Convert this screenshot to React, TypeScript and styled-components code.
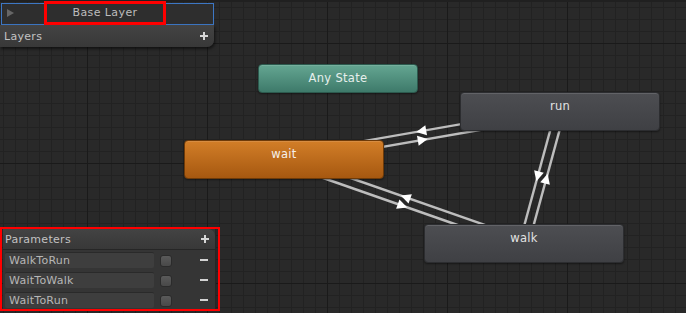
import { FC } from 'react';
import styled, { createGlobalStyle, css } from 'styled-components';

type NodeKind = 'any' | 'default' | 'state';

interface StateNode {
	id: string;
	label: string;
	x: number;
	y: number;
	w: number;
	h: number;
	kind: NodeKind;
}

const NODES: StateNode[] = [
	{ id: 'any', label: 'Any State', x: 258, y: 64, w: 160, h: 29, kind: 'any' },
	{ id: 'run', label: 'run', x: 460, y: 92, w: 200, h: 39, kind: 'state' },
	{ id: 'wait', label: 'wait', x: 184, y: 140, w: 200, h: 39, kind: 'default' },
	{ id: 'walk', label: 'walk', x: 424, y: 224, w: 200, h: 39, kind: 'state' },
];

const TRANSITIONS: [string, string][] = [
	['wait', 'run'],
	['run', 'wait'],
	['wait', 'walk'],
	['walk', 'wait'],
	['run', 'walk'],
	['walk', 'run'],
];

const PARAMETERS = ['WalkToRun', 'WaitToWalk', 'WaitToRun'];

const OFFSET = 4.5;

const center = (id: string) => {
	const n = NODES.find((node) => node.id === id)!;
	return { x: n.x + n.w / 2, y: n.y + n.h / 2 };
};

const Transitions: FC = () => (
	<TransitionLayer width={686} height={313}>
		{TRANSITIONS.map(([from, to]) => {
			const a = center(from);
			const b = center(to);
			const dx = b.x - a.x;
			const dy = b.y - a.y;
			const len = Math.hypot(dx, dy);
			const ux = dx / len;
			const uy = dy / len;
			const ox = -uy * OFFSET;
			const oy = ux * OFFSET;
			const mx = (a.x + b.x) / 2 + ox;
			const my = (a.y + b.y) / 2 + oy;
			const tip = `${mx + ux * 5},${my + uy * 5}`;
			const left = `${mx - ux * 5 - uy * 5},${my - uy * 5 + ux * 5}`;
			const right = `${mx - ux * 5 + uy * 5},${my - uy * 5 - ux * 5}`;
			return (
				<g key={`${from}-${to}`}>
					<line
						x1={a.x + ox}
						y1={a.y + oy}
						x2={b.x + ox}
						y2={b.y + oy}
						stroke="#bdbdbd"
						strokeWidth={2.4}
					/>
					<polygon points={`${tip} ${left} ${right}`} fill="#ffffff" />
				</g>
			);
		})}
	</TransitionLayer>
);

const App: FC = () => (
	<>
		<GlobalStyle />
		<Canvas>
			<Transitions />
			{NODES.map((node) => (
				<Node
					key={node.id}
					$kind={node.kind}
					style={{ left: node.x, top: node.y, width: node.w, height: node.h }}
				>
					{node.label}
				</Node>
			))}
			<Sidebar>
				<TopGroup>
					<LayerBar>
						<PlayTriangle />
						<Crumb>Base Layer</Crumb>
					</LayerBar>
					<SectionHeader $rounded="bottom">
						Layers
						<PlusIcon />
					</SectionHeader>
				</TopGroup>
				<Highlight>
					<ParamsPanel>
						<SectionHeader $rounded="top">
							Parameters
							<PlusIcon />
						</SectionHeader>
						<ParamsBody>
							{PARAMETERS.map((name) => (
								<ParamRow key={name}>
									<ParamField>{name}</ParamField>
									<Checkbox />
									<MinusIcon />
								</ParamRow>
							))}
						</ParamsBody>
					</ParamsPanel>
				</Highlight>
			</Sidebar>
		</Canvas>
	</>
);

const GlobalStyle = createGlobalStyle`
	html, body {
		margin: 0;
		padding: 0;
		background: #292929;
	}
`;

const Canvas = styled.div`
	position: relative;
	width: 686px;
	height: 313px;
	overflow: hidden;
	font-family: 'DejaVu Sans', 'Liberation Sans', sans-serif;
	font-size: 11px;
	background-color: #292929;
	background-image: linear-gradient(to right, #1a1a1a 1px, transparent 1px),
		linear-gradient(to bottom, #1a1a1a 1px, transparent 1px),
		linear-gradient(to right, #222222 1px, transparent 1px),
		linear-gradient(to bottom, #222222 1px, transparent 1px);
	background-size: 120px 120px, 120px 120px, 12px 12px, 12px 12px;
	background-position: 87px 43px, 87px 43px, 3px 7px, 3px 7px;
	box-shadow: inset 0 2px 0 #202020;
`;

const TransitionLayer = styled.svg`
	position: absolute;
	left: 0;
	top: 0;
`;

const nodeColours = {
	any: css`
		background: linear-gradient(#64a692, #3e7a6a);
		border-color: #2c5a4e;
		color: #e6efec;
		line-height: 27px;
	`,
	default: css`
		background: linear-gradient(#d27e28, #a65810);
		border-color: #6e3a08;
		color: #f6f0ea;
		line-height: 26px;
	`,
	state: css`
		background: linear-gradient(#4d4e52, #3f4044);
		border-color: #2c2d30;
		color: #e2e2e2;
		line-height: 26px;
	`,
};

const Node = styled.div<{ $kind: NodeKind }>`
	position: absolute;
	box-sizing: border-box;
	border: 1px solid;
	border-radius: 4px;
	text-align: center;
	letter-spacing: 0.3px;
	font-size: 11.5px;
	box-shadow: 0 1px 2px rgba(0, 0, 0, 0.45), inset 0 1px 0 rgba(255, 255, 255, 0.12);
	${({ $kind }) => nodeColours[$kind]}
`;

const Sidebar = styled.div`
	position: absolute;
	left: 0;
	top: 0;
	bottom: 0;
	width: 220px;
	display: flex;
	flex-direction: column;
	justify-content: space-between;
	padding: 3px 0 2px;
	box-sizing: border-box;
`;

const TopGroup = styled.div`
	display: flex;
	flex-direction: column;
	width: 214px;
`;

const LayerBar = styled.div`
	display: flex;
	align-items: flex-start;
	height: 22px;
	margin-left: 1px;
	box-sizing: border-box;
	border: 1px solid #3d77c4;
	background: #2e2e2e;
`;

const PlayTriangle = styled.span`
	width: 0;
	height: 0;
	margin: 5px 0 0 5px;
	border-left: 7px solid #666666;
	border-top: 4.5px solid transparent;
	border-bottom: 4.5px solid transparent;
`;

const Crumb = styled.div`
	flex: none;
	width: 122px;
	height: 24px;
	margin: -3px 0 0 30px;
	box-sizing: border-box;
	border: 3px solid #ff0000;
	color: #bdbdbd;
	letter-spacing: 0.4px;
	text-align: center;
	line-height: 18px;
`;

const SectionHeader = styled.div<{ $rounded: 'top' | 'bottom' }>`
	position: relative;
	display: flex;
	align-items: center;
	height: 21px;
	padding-left: 4px;
	color: #c2c2c2;
	letter-spacing: 0.3px;
	background: linear-gradient(#434343, #383838);
	${({ $rounded }) =>
		$rounded === 'bottom'
			? css`
					height: 22px;
					border-bottom-right-radius: 7px;
					box-shadow: 1px 2px 3px rgba(0, 0, 0, 0.55);
				`
			: css`
					height: 20px;
					padding-left: 2px;
					border-top-right-radius: 7px;
					border-bottom: 1px solid #262626;
				`}
`;

const PlusIcon = styled.span`
	position: absolute;
	right: 6px;
	top: 50%;
	width: 8px;
	height: 8px;
	margin-top: -4px;

	&::before,
	&::after {
		content: '';
		position: absolute;
		background: #d6d6d6;
	}
	&::before {
		left: 0;
		top: 3px;
		width: 8px;
		height: 2px;
	}
	&::after {
		left: 3px;
		top: 0;
		width: 2px;
		height: 8px;
	}
`;

const Highlight = styled.div`
	width: 220px;
	height: 84px;
	box-sizing: border-box;
	border: 2px solid #ff0000;
	padding-left: 1px;
`;

const ParamsPanel = styled.div`
	width: 212px;
	height: 100%;
	background: #353535;
	box-shadow: 1px 0 0 #262626;
`;

const ParamsBody = styled.div`
	display: flex;
	flex-direction: column;
`;

const ParamRow = styled.div`
	display: flex;
	align-items: flex-start;
	height: 20px;
	padding: 2px 0 0 2px;
	box-sizing: border-box;
`;

const ParamField = styled.div`
	width: 149px;
	height: 16px;
	box-sizing: border-box;
	padding-left: 4px;
	border-top: 1px solid #2a2a2a;
	border-radius: 2px;
	background: #3e3e3e;
	color: #b6b6b6;
	letter-spacing: 0.25px;
	line-height: 15px;
`;

const Checkbox = styled.span`
	width: 12px;
	height: 12px;
	margin: 3px 0 0 6px;
	box-sizing: border-box;
	border: 1px solid #2b2b2b;
	border-radius: 3px;
	background: linear-gradient(#5a5a5a, #494949);
`;

const MinusIcon = styled.span`
	width: 8px;
	height: 2px;
	margin: 7px 0 0 28px;
	background: #d2d2d2;
`;

export default App;
